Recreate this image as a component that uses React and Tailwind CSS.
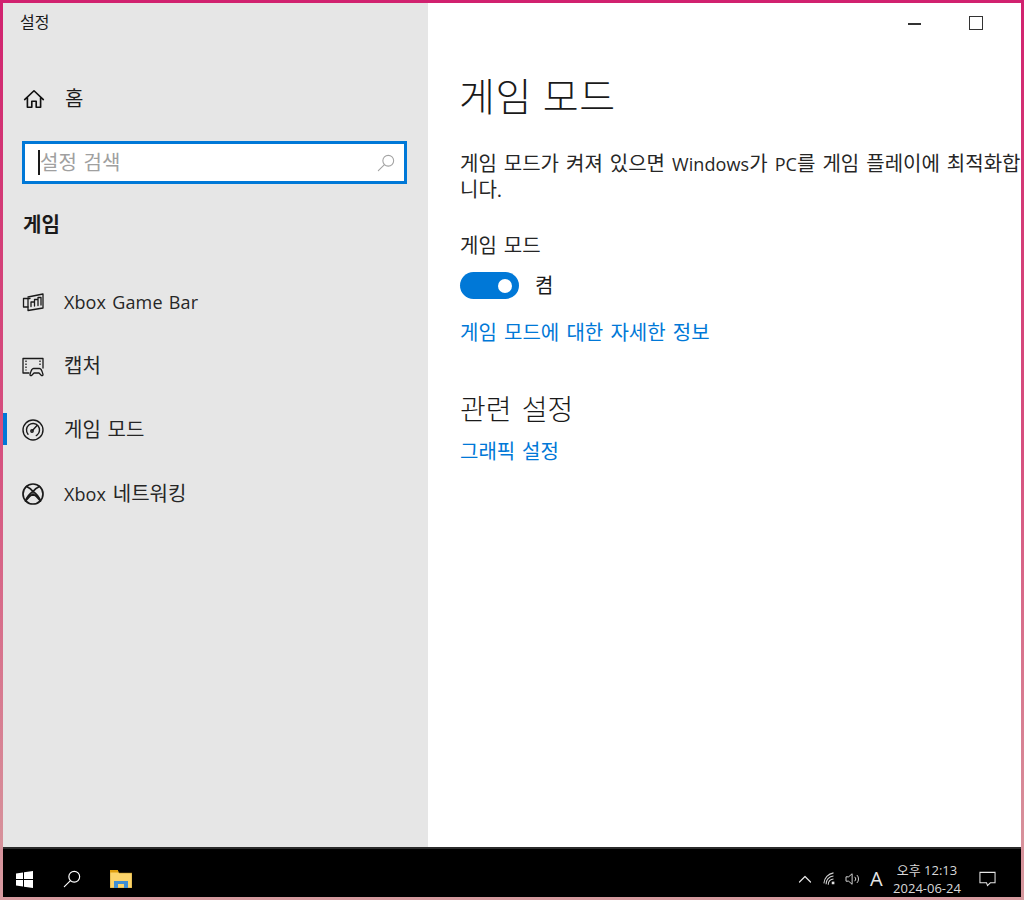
import React from "react";

const I = ({ children, className = "", vb = "0 0 20 20", sw = 1.3 }) => (
  <svg viewBox={vb} className={className} fill="none" stroke="currentColor" strokeWidth={sw} strokeLinecap="round" strokeLinejoin="round">{children}</svg>
);

const Lat = ({ children }) => <span className="text-[18px] tracking-[0.1px]">{children}</span>;

const NavItem = ({ icon, label, active }) => (
  <div className="relative h-16 flex items-center pl-[19px]">
    {active && <div className="absolute left-0 top-[15px] w-[4px] h-[32px] bg-[#0078d7]" />}
    <div className="w-[22px] h-[22px] text-[#1a1a1a]">{icon}</div>
    <span className="ml-[20px] text-[20px] leading-6 text-[#262626] whitespace-nowrap [word-spacing:1.5px]">{label}</span>
  </div>
);

export default function App() {
  return (
    <div className="w-[1024px] h-[900px] p-[3px] overflow-hidden bg-gradient-to-b from-[#d1216f] via-[#d6507f] to-[#d69a9f] font-['Open_Sans','Noto_Sans_CJK_KR',sans-serif]">
      <div className="w-[1018px] h-[894px] flex flex-col bg-white">
        <div className="flex h-[844px]">
          <aside className="w-[425px] bg-[#e6e6e6] flex flex-col shrink-0">
            <div className="h-[40px] pl-[17px] pt-[8px] text-[16px] leading-[22px] text-[#1a1a1a]">설정</div>
            <div className="h-[48px] mt-[32px] flex items-center pl-[20px]">
              <I className="w-[22px] h-[22px] text-[#111]" sw={1.5}>
                <path d="M1.500 10.500 10 2.500l8.500 8M4 9v8.500h4v-5.500h4v5.500h4V9" />
              </I>
              <span className="ml-[20px] text-[20px] leading-6 text-[#1a1a1a]">홈</span>
            </div>
            <div className="ml-[19px] mt-[18px] h-[43px] w-[385px] border-[3px] border-[#0078d7] bg-white flex items-center pl-[13px] pr-[9px]">
              <div className="w-[2px] h-[25px] bg-[#1a1a1a] shrink-0" />
              <span className="text-[20px] leading-6 text-[#a0a0a0] flex-1 [word-spacing:1.5px]">설정 검색</span>
              <I className="w-[18px] h-[18px] text-[#a3a3a3]" sw={1.2}>
                <circle cx="12.500" cy="7.500" r="6" />
                <path d="M8 12 1.500 18.500" />
              </I>
            </div>
            <h2 className="pl-[20px] mt-[29px] text-[20px] leading-6 font-bold text-[#1a1a1a]">게임</h2>
            <nav className="mt-[33px]">
              <NavItem label={<Lat>Xbox Game Bar</Lat>} icon={
                <I className="w-full h-full" vb="0 0 22 22" sw={1.3}>
                  <path d="M6 16H1.500V7.500H8" />
                  <path d="M6 8v11.500l15-2.500V3L6 6" />
                  <path d="M9 15.500V11h3.500v4M12.500 15V8.500H16V14.500M16 14.500V6.500h3v7.500" />
                </I>} />
              <NavItem label="캡처" icon={
                <I className="w-full h-full" vb="0 0 22 22" sw={1.3}>
                  <path d="M7 18H1V3.500h20V13" />
                  <path d="M4 5.500v10M18 5.500v6" strokeDasharray="1.500 1.500" strokeLinecap="butt" />
                  <path d="M11.500 13.500h6c1.500 0 2.500 2 3.500 6 0 1.300-1 1.500-1.800.7L17 18h-5l-2.200 2.200c-.8.8-1.800.6-1.800-.7 1-4 2-6 3.500-6Z" />
                </I>} />
              <NavItem active label="게임 모드" icon={
                <I className="w-full h-full" vb="0 0 22 22" sw={1.4}>
                  <circle cx="11" cy="11" r="10" />
                  <circle cx="11" cy="11" r="6.500" strokeDasharray="31 10" transform="rotate(140 11 11)" />
                  <path d="M10 12 15 6.500" />
                  <circle cx="10" cy="12" r="1.200" />
                </I>} />
              <NavItem label={<><Lat>Xbox</Lat> 네트워킹</>} icon={
                <I className="w-full h-full" vb="0 0 22 22" sw={1.7}>
                  <circle cx="11" cy="11" r="10" />
                  <path d="M4.500 3.500C7 4.500 9.500 6.500 11 8.500 12.500 6.500 15 4.500 17.500 3.500M3.500 18C5 14 8 10.500 11 8.500c3 2 6 5.500 7.500 9.500M3.500 18C6 14.500 9 12 11 11c2 1 5 3.500 7.500 7" />
                </I>} />
            </nav>
          </aside>

          <main className="flex-1 relative overflow-hidden">
            <div className="absolute right-[38px] top-[13px] w-[14px] h-[14px] border-[1.5px] border-[#333]" />
            <div className="absolute right-[100px] top-[20px] w-[13px] h-[1.5px] bg-[#333]" />
            <div className="pl-[31px] pt-[64px]">
              <h1 className="text-[39px] leading-[60px] font-light text-[#1a1a1a] -mt-[1px] tracking-[0.6px] whitespace-nowrap">게임 모드</h1>
              <div className="pl-[1px]">
                <p className="mt-[25px] text-[20px] leading-[25px] text-[#262626] whitespace-nowrap [word-spacing:1.8px]">
                  게임 모드가 켜져 있으면 <Lat>Windows</Lat>가 <Lat>PC</Lat>를 게임 플레이에 최적화합<br />니다.
                </p>
                <div className="mt-[32px] text-[20px] leading-6 text-[#262626] [word-spacing:1.8px]">게임 모드</div>
                <div className="mt-[14px] flex items-center h-[27px]">
                  <div className="w-[59px] h-[27px] rounded-full bg-[#0078d7] relative shrink-0">
                    <div className="absolute right-[7px] top-[6.500px] w-[14px] h-[14px] rounded-full bg-white" />
                  </div>
                  <span className="ml-[16px] text-[20px] leading-6 text-[#1a1a1a]">켬</span>
                </div>
                <a className="block mt-[22px] text-[20px] leading-6 text-[#0078d7] whitespace-nowrap [word-spacing:2px]">게임 모드에 대한 자세한 정보</a>
                <h2 className="mt-[46px] text-[28px] leading-[36px] font-light text-[#1a1a1a] [word-spacing:3px]">관련 설정</h2>
                <a className="block mt-[13px] text-[20px] leading-6 text-[#0078d7] [word-spacing:1.6px]">그래픽 설정</a>
              </div>
            </div>
          </main>
        </div>

        <footer className="h-[50px] bg-black flex items-center border-t-2 border-[#2b2b2b] pt-[12px]">
          <div className="flex items-center ml-[13px]">
            <svg viewBox="0 0 17 17" className="w-[17px] h-[17px]" fill="#fff">
              <path d="M0 2.400 7 1.400V8H0ZM8 1.300 17 0v8H8ZM0 9h7v6.600L0 14.600ZM8 9h9v8l-9-1.300Z" />
            </svg>
            <I className="ml-[30px] w-[18px] h-[18px] text-white" sw={1.3}>
              <circle cx="12.500" cy="7.500" r="6" />
              <path d="M8 12 1.500 18.500" />
            </I>
            <svg viewBox="0 0 22 18" className="ml-[29px] w-[22px] h-[18px]">
              <path d="M0 1h8l1 2h13v15H0Z" fill="#fcd46a" stroke="#a8801c" strokeWidth="0.500" />
              <path d="M0 0h8v2.500H0Z" fill="#e0a010" />
              <path d="M4 18V11h14v7h-4v-4H8v4Z" fill="#3f8ed4" />
            </svg>
          </div>
          <div className="ml-auto flex items-center">
            <I className="w-[14px] h-[14px] text-[#e6e6e6]" vb="0 0 14 14" sw={1.2}><path d="M1.500 10 7 4.500l5.500 5.500" /></I>
            <svg viewBox="0 0 16 16" className="ml-[11px] w-[14px] h-[14px]" fill="none" stroke="#d0d0d0" strokeWidth="1.200">
              <path d="M1 13A13 13 0 0 1 12 1M3.500 14A9 9 0 0 1 12 4.500M6 14.500A6 6 0 0 1 12 8" />
              <rect x="10" y="11" width="3" height="3" fill="#e0e0e0" stroke="none" />
            </svg>
            <svg viewBox="0 0 18 16" className="ml-[8px] w-[16px] h-[14px]" fill="none" stroke="#d9d9d9" strokeWidth="1.100">
              <path d="M1 5.500h3L8 2v12l-4-3.500H1ZM11 5.500a3.500 3.500 0 0 1 0 5M13.500 3.500a6.500 6.500 0 0 1 0 9" />
            </svg>
            <span className="ml-[9px] w-[16px] text-[20px] leading-6 text-[#e6e6e6]">A</span>
            <div className="ml-[6px] w-[70px] text-center text-[13px] leading-[18px] text-[#d9d9d9]">
              <div className="whitespace-nowrap">오후 12:13</div>
              <div className="whitespace-nowrap">2024-06-24</div>
            </div>
            <svg viewBox="0 0 18 16" className="ml-[17px] mr-[25px] w-[17px] h-[16px]" fill="none" stroke="#e6e6e6" strokeWidth="1.100">
              <path d="M1 1h16v11h-5l-3 3-1-3H1Z" />
            </svg>
          </div>
        </footer>
      </div>
    </div>
  );
}
